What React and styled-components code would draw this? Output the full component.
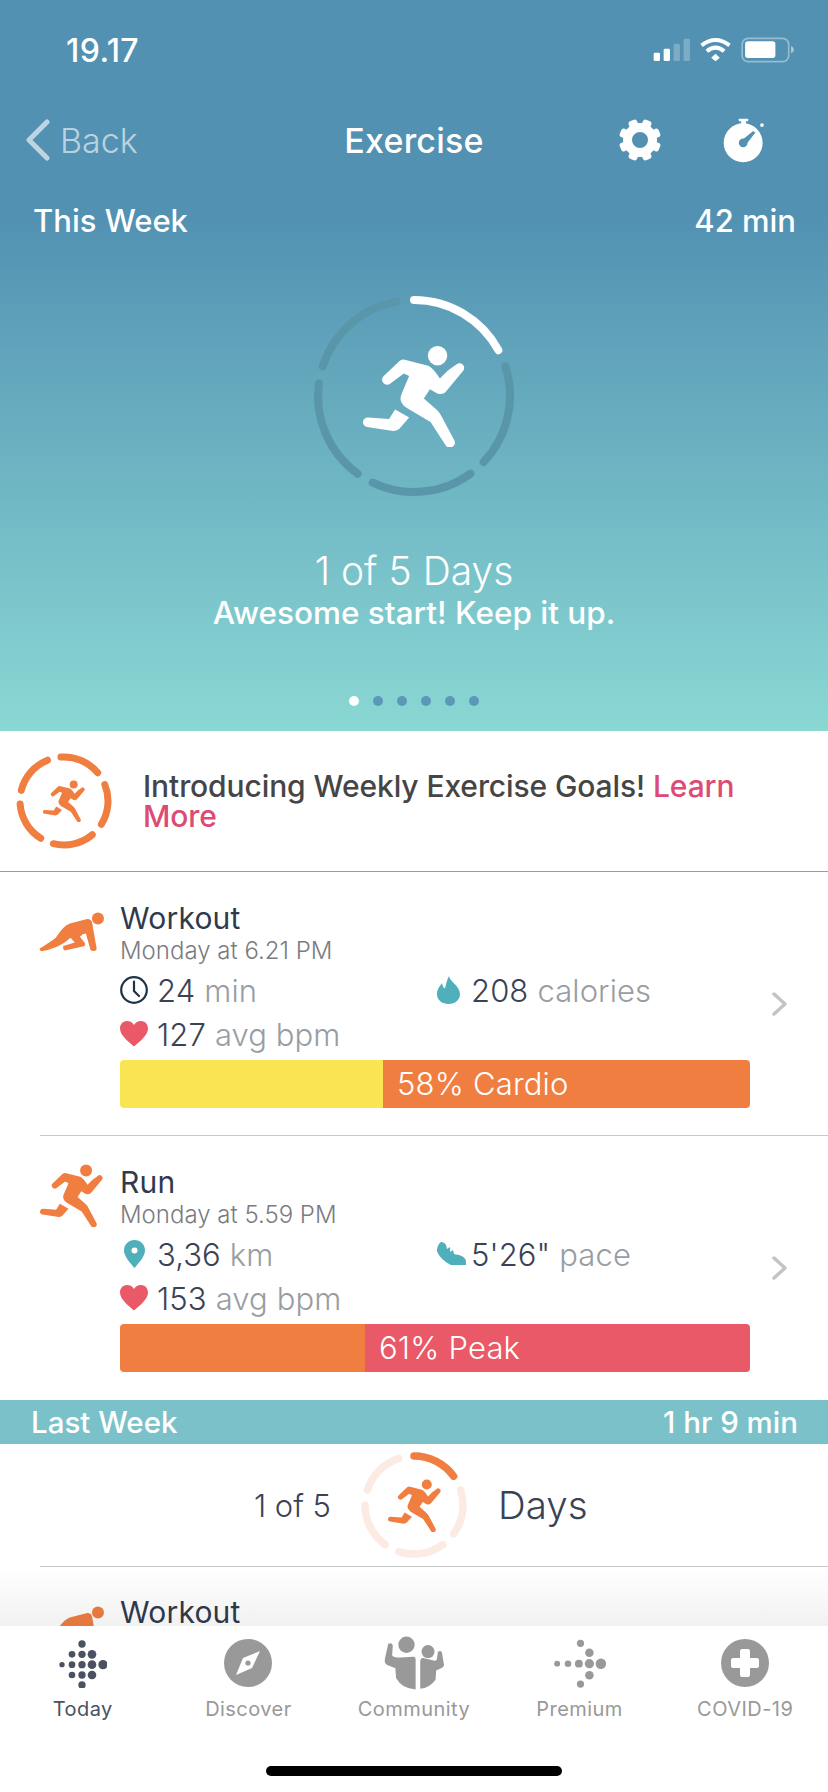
import styled, { createGlobalStyle } from "styled-components";

const GlobalStyle = createGlobalStyle`
  html, body {
    margin: 0;
    padding: 0;
    background: #fff;
    font-family: Inter, "Noto Sans", sans-serif;
  }
`;

const Page = styled.div`
  width: 828px;
  height: 1792px;
  display: flex;
  flex-direction: column;
  overflow: hidden;
  background: #fff;
  color: #3a4356;
`;

const Hero = styled.section`
  height: 731px;
  flex: none;
  display: flex;
  flex-direction: column;
  color: #fff;
  background: linear-gradient(180deg, #5291b2 0, #5291b2 215px, #8ad8d4 731px);
`;

const StatusBar = styled.div`
  height: 100px;
  display: flex;
  align-items: center;
  justify-content: space-between;
  padding: 0 33px 0 66px;
`;

const Time = styled.span`
  font-size: 32px;
  font-weight: 500;
  letter-spacing: 0.4px;
`;

const NavBar = styled.div`
  height: 80px;
  display: grid;
  grid-template-columns: 1fr auto 1fr;
  align-items: center;
`;

const BackLink = styled.div`
  display: flex;
  align-items: center;
  gap: 9px;
  padding-left: 25px;
  font-size: 34px;
  font-weight: 300;
  color: rgba(255, 255, 255, 0.62);
`;

const NavTitle = styled.h1`
  margin: 0;
  font-size: 34px;
  font-weight: 500;
  letter-spacing: 0.2px;
`;

const NavActions = styled.div`
  display: flex;
  justify-content: flex-end;
  align-items: center;
  gap: 62px;
  padding-right: 63px;
`;

const WeekRow = styled.div`
  margin-top: 20px;
  height: 40px;
  display: flex;
  align-items: center;
  justify-content: space-between;
  padding: 0 32px 0 33px;
  font-size: 31px;
  font-weight: 500;
`;

const RingBox = styled.div`
  position: relative;
  flex: none;
  width: ${(p) => p.$size}px;
  height: ${(p) => p.$size}px;
`;

const HeroRing = styled(RingBox)`
  margin: 51px auto 0;
`;

const RingCenter = styled.div`
  position: absolute;
  inset: 0;
  display: flex;
  align-items: center;
  justify-content: center;
`;

const DaysText = styled.div`
  margin-top: 48px;
  height: 44px;
  line-height: 44px;
  text-align: center;
  font-size: 39px;
  font-weight: 300;
`;

const Encourage = styled.div`
  height: 40px;
  line-height: 40px;
  text-align: center;
  font-size: 31.5px;
  font-weight: 500;
`;

const Dots = styled.div`
  margin-top: 63px;
  display: flex;
  justify-content: center;
  gap: 14px;
`;

const Dot = styled.span`
  width: 10px;
  height: 10px;
  border-radius: 50%;
  background: ${(p) => (p.$active ? "#fff" : "#5a98b6")};
`;

const Banner = styled.div`
  height: 140px;
  flex: none;
  display: flex;
  align-items: center;
  gap: 31px;
  padding: 0 16px;
  border-bottom: 1px solid #9c9c9c;
`;

const BannerText = styled.p`
  margin: 0;
  width: 640px;
  font-size: 30px;
  line-height: 30px;
  font-weight: 500;
  letter-spacing: -0.1px;
  color: #454545;
`;

const LearnMore = styled.span`
  color: #dd4a73;
`;

const Scroll = styled.div`
  position: relative;
  flex: 1;
  min-height: 0;
  overflow: hidden;
`;

const Fade = styled.div`
  position: absolute;
  left: 0;
  right: 0;
  bottom: 0;
  height: 59px;
  background: linear-gradient(180deg, rgba(0, 0, 0, 0), rgba(0, 0, 0, 0.055));
`;

const Activity = styled.article`
  margin-left: 40px;
  padding: 28px 0 ${(p) => (p.$last ? "28px" : "27px")};
  display: grid;
  grid-template-columns: 80px 630px 1fr;
  border-bottom: ${(p) => (p.$last ? "none" : "1px solid #c8c8c8")};
`;

const PeekRow = styled.article`
  margin-left: 40px;
  padding-top: 31px;
  display: grid;
  grid-template-columns: 80px 1fr;
`;

const ActivityIcon = styled.div`
  margin-top: ${(p) => p.$top || 0}px;
  margin-left: ${(p) => p.$left || 0}px;
`;

const Title = styled.div`
  height: 36px;
  line-height: 36px;
  font-size: 30px;
  font-weight: 400;
  letter-spacing: 0.2px;
  color: #2f3a4c;
`;

const PeekTitle = styled(Title)`
  height: 28px;
  line-height: 28px;
`;

const When = styled.div`
  height: 30px;
  line-height: 30px;
  font-size: 24px;
  font-weight: 300;
  color: #7a7c80;
`;

const Stats = styled.div`
  margin-top: 2px;
  display: grid;
  grid-template-columns: 317px 1fr;
  grid-auto-rows: 44px;
`;

const Stat = styled.div`
  display: flex;
  align-items: center;
  font-size: 31px;
  font-weight: 300;
  letter-spacing: 0.1px;
  white-space: nowrap;
`;

const StatIcon = styled.span`
  width: ${(p) => p.$width}px;
  flex: none;
  display: flex;
  padding-left: ${(p) => p.$pad || 0}px;
  box-sizing: border-box;
`;

const Unit = styled.span`
  margin-left: 9px;
  color: #989da3;
`;

const ZoneBar = styled.div`
  margin-top: 4px;
  height: 48px;
  display: flex;
  border-radius: 4px;
  overflow: hidden;
`;

const Zone = styled.div`
  flex: ${(p) => (p.$width ? `0 0 ${p.$width}px` : 1)};
  background: ${(p) => p.$color};
  padding-left: 14px;
  line-height: 48px;
  font-size: 31px;
  font-weight: 300;
  letter-spacing: 0.2px;
  color: #fff;
  box-sizing: border-box;
`;

const Chevron = styled.div`
  align-self: center;
  margin-left: 22px;
  display: flex;
`;

const LastWeekHeader = styled.div`
  height: 44px;
  display: flex;
  align-items: center;
  justify-content: space-between;
  padding: 0 30px 0 31px;
  background: #7bc1c9;
  color: #fff;
  font-size: 29.5px;
  font-weight: 500;
`;

const Summary = styled.div`
  height: 122px;
  display: grid;
  grid-template-columns: 1fr auto 1fr;
  align-items: center;
`;

const SummaryLeft = styled.span`
  justify-self: end;
  margin-right: 28px;
  font-size: 31px;
  font-weight: 300;
`;

const SummaryRight = styled.span`
  margin-left: 29px;
  font-size: 38.5px;
  font-weight: 300;
`;

const Divider = styled.div`
  margin-left: 40px;
  height: 1px;
  background: #c8c8c8;
`;

const TabBar = styled.nav`
  position: relative;
  height: 166px;
  flex: none;
  background: #fff;
  display: grid;
  grid-template-columns: repeat(5, 1fr);
`;

const Tab = styled.div`
  display: flex;
  flex-direction: column;
  align-items: center;
  color: ${(p) => (p.$active ? "#4a5260" : "#999")};
`;

const TabIcon = styled.div`
  height: 62px;
  margin-top: 6px;
  display: flex;
  align-items: center;
  justify-content: center;
`;

const TabLabel = styled.span`
  line-height: 30px;
  font-size: 20px;
  font-weight: 400;
  letter-spacing: 0.45px;
`;

const HomeBar = styled.div`
  position: absolute;
  left: 266px;
  bottom: 16px;
  width: 296px;
  height: 10px;
  border-radius: 5px;
  background: #000;
`;

const polar = (c, r, deg) => {
  const a = ((deg - 90) * Math.PI) / 180;
  return [c + r * Math.cos(a), c + r * Math.sin(a)];
};

const Ring = ({ size, radius, stroke, active, idle, start = 0, sweep = 62 }) => {
  const c = size / 2;
  return (
    <svg width={size} height={size} viewBox={`0 0 ${size} ${size}`} fill="none" strokeLinecap="round" strokeWidth={stroke}>
      {[0, 1, 2, 3, 4].map((i) => {
        const [x1, y1] = polar(c, radius, start + i * 72);
        const [x2, y2] = polar(c, radius, start + i * 72 + sweep);
        return (
          <path
            key={i}
            d={`M${x1} ${y1}A${radius} ${radius} 0 0 1 ${x2} ${y2}`}
            stroke={i === 0 || !idle ? active : idle}
          />
        );
      })}
    </svg>
  );
};

const Runner = ({ size, color = "#f07e41" }) => (
  <svg width={size} height={size} viewBox="250 225 305 305" fill={color}>
    <circle cx="473" cy="257" r="29" />
    <path d="M372 268L445 287Q458 292 480 325L503 302L528 284A14 14 0 0 1 549 303L500 362Q490 376 472 370L450 357L432 385L472 420Q480 428 486 440L524 512A15 15 0 0 1 498 526L452 455L380 413Q355 395 365 372L388 318L372 310L332 340A14 14 0 0 1 312 318L360 272Q365 268 372 268Z" />
    <path d="M266 442L328 446L346 418L388 442L358 476Q350 482 340 482L262 470A14 14 0 0 1 266 442Z" />
  </svg>
);

const Crouch = () => (
  <svg width="67" height="42" viewBox="25 15 200 125" fill="#f07e41">
    <circle cx="204" cy="40" r="18" />
    <path d="M30 130Q60 112 78 98Q100 62 120 55L172 42Q185 42 187 55L200 130Q200 138 190 137L182 135L168 85Q160 84 150 95L165 113Q168 122 158 124L105 136Q98 130 100 122L135 112L122 98Q100 118 80 125Q55 135 35 138Q28 135 30 130Z" />
  </svg>
);

const StatusIcons = () => (
  <svg width="143" height="26" viewBox="125 35 430 78" fill="#fff">
    <rect x="130" y="82" width="19" height="25" rx="4" />
    <rect x="160" y="70" width="19" height="37" rx="4" />
    <rect x="190" y="55" width="19" height="52" rx="4" opacity=".25" />
    <rect x="220" y="40" width="19" height="67" rx="4" opacity=".25" />
    <path d="M274 60Q316 28 358 60M290 78Q316 56 342 78" fill="none" stroke="#fff" strokeWidth="12" />
    <path d="M303 97L316 85L329 97L316 108Z" />
    <rect x="396" y="39" width="140" height="70" rx="18" fill="none" stroke="#fff" strokeOpacity=".4" strokeWidth="5" />
    <rect x="405" y="48" width="91" height="50" rx="8" />
    <path d="M543 62Q552 66 552 73Q552 80 543 84Z" opacity=".5" />
  </svg>
);

const BackChevron = () => (
  <svg width="26" height="42" viewBox="0 0 26 42" fill="none" stroke="rgba(255,255,255,0.62)" strokeWidth="5" strokeLinecap="round" strokeLinejoin="round">
    <path d="M22 3L4 21L22 39" />
  </svg>
);

const Gear = () => (
  <svg width="42" height="42" viewBox="-21 -21 42 42" fill="#fff">
    <circle r="12.5" fill="none" stroke="#fff" strokeWidth="9" />
    {[0, 45, 90, 135, 180, 225, 270, 315].map((deg) => (
      <rect key={deg} x="-4.5" y="-21" width="9" height="8" rx="2.5" transform={`rotate(${deg + 22.5})`} />
    ))}
  </svg>
);

const Stopwatch = () => (
  <svg width="42" height="45" viewBox="340 278 125 134" fill="#fff">
    <rect x="387" y="280" width="28" height="8" rx="2" />
    <rect x="394" y="286" width="14" height="12" />
    <circle cx="400" cy="352" r="58" />
    <circle cx="456" cy="299" r="5.5" />
    <circle cx="400" cy="352" r="13" fill="#5291b2" />
    <path d="M395 345L430 317L436 322L408 358Z" fill="#5291b2" />
  </svg>
);

const Clock = () => (
  <svg width="28" height="28" viewBox="0 0 28 28" fill="none" stroke="#1f3347" strokeWidth="2.2" strokeLinecap="round">
    <circle cx="14" cy="14" r="12.8" />
    <path d="M14 5.5V15L19 20" />
  </svg>
);

const Heart = () => (
  <svg width="28" height="26" viewBox="0 0 28 26" fill="#e95967">
    <path d="M14 25.5C9 21 0 14.5 0 7.5C0 3 3.2 0 7 0C10 0 12.6 1.6 14 4C15.4 1.6 18 0 21 0C24.8 0 28 3 28 7.5C28 14.5 19 21 14 25.5Z" />
  </svg>
);

const Drop = () => (
  <svg width="23" height="28" viewBox="0 0 23 28" fill="#4fb0bb">
    <path d="M12 0C13 6 23 10 23 18C23 24 18 28 11.5 28C5 28 0 24 0 18C0 13 3 10 5 7C5.5 10 6.5 12 8 12.5C9 8 10 4 12 0Z" />
  </svg>
);

const Pin = () => (
  <svg width="21" height="28" viewBox="0 0 21 28" fill="#4fb0bb">
    <path d="M10.5 0C16.3 0 21 4.6 21 10.4C21 16.5 14.5 23 10.5 28C6.5 23 0 16.5 0 10.4C0 4.6 4.7 0 10.5 0ZM10.5 7.5A3 3 0 1 0 10.5 13.5A3 3 0 1 0 10.5 7.5Z" fillRule="evenodd" />
  </svg>
);

const Shoe = () => (
  <svg width="29" height="24" viewBox="0 0 29 24" fill="#4fb0bb">
    <path d="M4 0C6 0 8 1 9 3L10 7L13 5L13 10L16 8L17 12C22 13 28 14 29 19L29 23L14 23C8 20 2 15 0 9C0 5 2 1 4 0Z" />
  </svg>
);

const ChevronIcon = () => (
  <svg width="15" height="24" viewBox="0 0 15 24" fill="none" stroke="#c4c4c4" strokeWidth="3.5" strokeLinecap="round" strokeLinejoin="round">
    <path d="M2 2L13 12L2 22" />
  </svg>
);

const FITBIT_DOTS = [
  [242, 187, 11], [212, 218, 10], [242, 218, 11], [272, 218, 13],
  [182, 249, 8], [212, 249, 10], [242, 249, 11], [272, 249, 13], [305, 249, 14],
  [212, 280, 10], [242, 280, 11], [272, 280, 13], [242, 310, 11],
];

const PREMIUM_DOTS = [
  [715, 126, 11], [742, 155, 13], [644, 188, 9], [677, 188, 10], [710, 188, 12],
  [742, 188, 14], [777, 188, 16], [742, 223, 13], [715, 250, 11],
];

const TodayIcon = () => (
  <svg width="49" height="49" viewBox="170 172 147 147" fill="#4a5260">
    {FITBIT_DOTS.map(([x, y, r]) => <circle key={`${x}-${y}`} cx={x} cy={y} r={r} />)}
  </svg>
);

const DiscoverIcon = () => (
  <svg width="48" height="48" viewBox="0 0 48 48">
    <circle cx="24" cy="24" r="24" fill="#999" />
    <path d="M36 12L28 29L12 36L19 19Z" fill="#fff" />
    <circle cx="24" cy="24" r="2.6" fill="#999" />
  </svg>
);

const CommunityIcon = () => (
  <svg width="62" height="56" viewBox="122 105 190 168" fill="#999">
    <circle cx="194" cy="133" r="25" />
    <circle cx="260" cy="154" r="20" />
    <path d="M138 130Q150 125 152 135L150 165Q152 172 175 172L215 170Q222 170 222 178V270Q180 268 162 235L160 205L135 195Q125 190 128 175Z" />
    <path d="M236 185Q236 175 245 174L280 182Q288 182 288 172L290 155Q300 148 303 158L309 195Q308 203 300 205L285 212L283 240Q265 265 236 268Z" />
  </svg>
);

const PremiumIcon = () => (
  <svg width="54" height="49" viewBox="633 113 161 149" fill="#999">
    {PREMIUM_DOTS.map(([x, y, r]) => <circle key={`${x}-${y}`} cx={x} cy={y} r={r} />)}
  </svg>
);

const CovidIcon = () => (
  <svg width="48" height="48" viewBox="0 0 48 48">
    <circle cx="24" cy="24" r="24" fill="#999" />
    <path d="M19 12Q19 10 21 10H27Q29 10 29 12V19H36Q38 19 38 21V27Q38 29 36 29H29V36Q29 38 27 38H21Q19 38 19 36V29H12Q10 29 10 27V21Q10 19 12 19H19Z" fill="#fff" />
  </svg>
);

const ACTIVITIES = [
  {
    icon: <ActivityIcon $top={10} $left={-2}><Crouch /></ActivityIcon>,
    title: "Workout",
    when: "Monday at 6.21 PM",
    stats: [
      { icon: <StatIcon $width={37}><Clock /></StatIcon>, value: "24", unit: "min" },
      { icon: <StatIcon $width={34}><Drop /></StatIcon>, value: "208", unit: "calories" },
      { icon: <StatIcon $width={37}><Heart /></StatIcon>, value: "127", unit: "avg bpm" },
    ],
    zones: [
      { color: "#f9e552", width: 263 },
      { color: "#f07e41", label: "58% Cardio" },
    ],
  },
  {
    icon: <ActivityIcon><Runner size={63} /></ActivityIcon>,
    title: "Run",
    when: "Monday at 5.59 PM",
    stats: [
      { icon: <StatIcon $width={37} $pad={4}><Pin /></StatIcon>, value: "3,36", unit: "km" },
      { icon: <StatIcon $width={34}><Shoe /></StatIcon>, value: "5'26\"", unit: "pace" },
      { icon: <StatIcon $width={37}><Heart /></StatIcon>, value: "153", unit: "avg bpm" },
    ],
    zones: [
      { color: "#f07e41", width: 245 },
      { color: "#e95967", label: "61% Peak" },
    ],
  },
];

const TABS = [
  { label: "Today", icon: <TodayIcon />, active: true },
  { label: "Discover", icon: <DiscoverIcon /> },
  { label: "Community", icon: <CommunityIcon /> },
  { label: "Premium", icon: <PremiumIcon /> },
  { label: "COVID-19", icon: <CovidIcon /> },
];

const App = () => {
  return (
    <Page>
      <GlobalStyle />
      <Hero>
        <StatusBar>
          <Time>19.17</Time>
          <StatusIcons />
        </StatusBar>
        <NavBar>
          <BackLink>
            <BackChevron />
            Back
          </BackLink>
          <NavTitle>Exercise</NavTitle>
          <NavActions>
            <Gear />
            <Stopwatch />
          </NavActions>
        </NavBar>
        <WeekRow>
          <span>This Week</span>
          <span>42 min</span>
        </WeekRow>
        <HeroRing $size={210}>
          <Ring size={210} radius={96} stroke={8} active="#fff" idle="#5a96aa" start={0} sweep={61.5} />
          <RingCenter>
            <Runner size={102} color="#fff" />
          </RingCenter>
        </HeroRing>
        <DaysText>1 of 5 Days</DaysText>
        <Encourage>Awesome start! Keep it up.</Encourage>
        <Dots>
          {[0, 1, 2, 3, 4, 5].map((i) => <Dot key={i} $active={i === 0} />)}
        </Dots>
      </Hero>
      <Banner>
        <RingBox $size={96}>
          <Ring size={96} radius={44} stroke={7} active="#f07e41" start={-4} sweep={54} />
          <RingCenter>
            <Runner size={42} />
          </RingCenter>
        </RingBox>
        <BannerText>
          Introducing Weekly Exercise Goals! <LearnMore>Learn</LearnMore> <LearnMore>More</LearnMore>
        </BannerText>
      </Banner>
      <Scroll>
        {ACTIVITIES.map((item, index) => (
          <Activity key={item.title} $last={index === ACTIVITIES.length - 1}>
            {item.icon}
            <div>
              <Title>{item.title}</Title>
              <When>{item.when}</When>
              <Stats>
                {item.stats.map((stat) => (
                  <Stat key={stat.unit}>
                    {stat.icon}
                    {stat.value}
                    <Unit>{stat.unit}</Unit>
                  </Stat>
                ))}
              </Stats>
              <ZoneBar>
                {item.zones.map((zone) => (
                  <Zone key={zone.color} $color={zone.color} $width={zone.width}>
                    {zone.label}
                  </Zone>
                ))}
              </ZoneBar>
            </div>
            <Chevron>
              <ChevronIcon />
            </Chevron>
          </Activity>
        ))}
        <LastWeekHeader>
          <span>Last Week</span>
          <span>1 hr 9 min</span>
        </LastWeekHeader>
        <Summary>
          <SummaryLeft>1 of 5</SummaryLeft>
          <RingBox $size={110}>
            <Ring size={110} radius={49} stroke={7.5} active="#f07e41" idle="#fcebe2" start={0} sweep={54} />
            <RingCenter>
              <Runner size={53} />
            </RingCenter>
          </RingBox>
          <SummaryRight>Days</SummaryRight>
        </Summary>
        <Divider />
        <PeekRow>
          <ActivityIcon $top={6} $left={-2}><Crouch /></ActivityIcon>
          <PeekTitle>Workout</PeekTitle>
        </PeekRow>
        <Fade />
      </Scroll>
      <TabBar>
        {TABS.map((tab) => (
          <Tab key={tab.label} $active={tab.active}>
            <TabIcon>{tab.icon}</TabIcon>
            <TabLabel>{tab.label}</TabLabel>
          </Tab>
        ))}
        <HomeBar />
      </TabBar>
    </Page>
  );
};

export default App;
